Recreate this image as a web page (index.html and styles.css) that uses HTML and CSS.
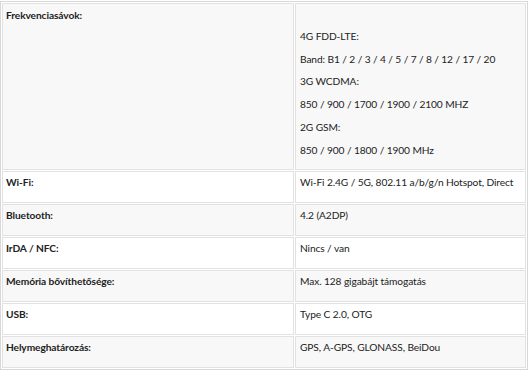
FILE: index.html
```html
<!DOCTYPE html>
<html lang="hu">
<head>
<meta charset="utf-8">
<title>Specifikáció</title>
<link rel="stylesheet" href="styles.css">
</head>
<body>
<div class="wrap">
<table class="spec">
  <colgroup>
    <col class="col-label">
    <col class="col-value">
  </colgroup>
  <tr class="odd">
    <td class="label first">Frekvenciasávok:</td>
    <td class="value bands">
      <div>4G FDD-LTE:</div>
      <div>Band: B1 / 2 / 3 / 4 / 5 / 7 / 8 / 12 / 17 / 20</div>
      <div>3G WCDMA:</div>
      <div>850 / 900 / 1700 / 1900 / 2100 MHZ</div>
      <div>2G GSM:</div>
      <div>850 / 900 / 1800 / 1900 MHz</div>
    </td>
  </tr>
  <tr class="even">
    <td class="label">Wi-Fi:</td>
    <td class="value">Wi-Fi 2.4G / 5G, 802.11 a/b/g/n Hotspot, Direct</td>
  </tr>
  <tr class="odd">
    <td class="label">Bluetooth:</td>
    <td class="value">4.2 (A2DP)</td>
  </tr>
  <tr class="even">
    <td class="label">IrDA / NFC:</td>
    <td class="value">Nincs / van</td>
  </tr>
  <tr class="odd">
    <td class="label">Memória bővíthetősége:</td>
    <td class="value">Max. 128 gigabájt támogatás</td>
  </tr>
  <tr class="even">
    <td class="label">USB:</td>
    <td class="value">Type C 2.0, OTG</td>
  </tr>
  <tr class="odd">
    <td class="label">Helymeghatározás:</td>
    <td class="value">GPS, A-GPS, GLONASS, BeiDou</td>
  </tr>
</table>
</div>
</body>
</html>
```
FILE: styles.css
```css
html, body {
  margin: 0;
  padding: 0;
  background: #ffffff;
}
.wrap {
  padding-top: 1px;
}
.spec {
  width: 528px;
  table-layout: fixed;
  border: 1px solid #d8d8d8;
  border-collapse: separate;
  border-spacing: 1px;
  font-family: "Lato", "Liberation Sans", sans-serif;
  font-size: 10.2px;
  line-height: 16px;
  letter-spacing: -0.1px;
  color: #222222;
}
.col-label {
  width: 292px;
}
.col-value {
  width: 231px;
}
.spec td {
  border: 1px solid #e2e2e2;
  vertical-align: top;
  padding: 2px 4px 12px 4px;
  white-space: nowrap;
  overflow: hidden;
}
.spec .label {
  padding-left: 3px;
  font-weight: bold;
}
.spec .label.first {
  padding-top: 3px;
}
.spec tr.odd td {
  background: #f8f8f8;
}
.spec tr.even td {
  background: #ffffff;
}
.spec .value.bands {
  padding-top: 21px;
  padding-bottom: 8px;
  line-height: 22.7px;
}
```
